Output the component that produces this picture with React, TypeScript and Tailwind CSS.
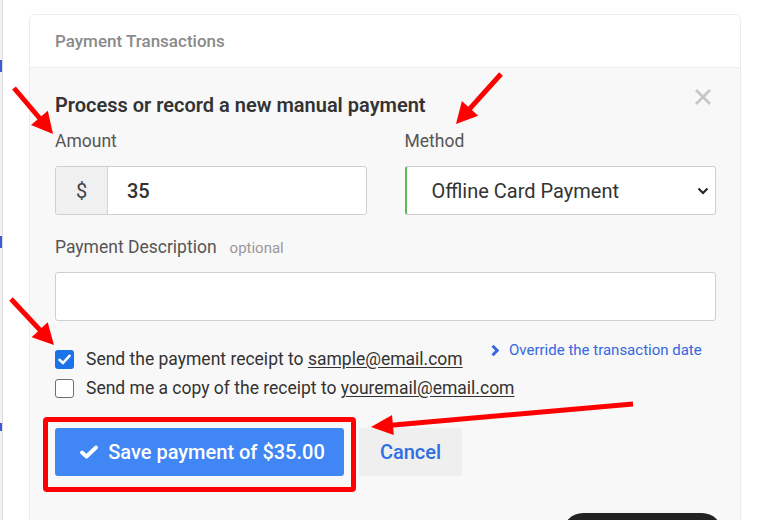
import React from "react";

type ArrowProps = { x1: number; y1: number; x2: number; y2: number; len?: number; half?: number };

const Arrow = ({ x1, y1, x2, y2, len = 21, half = 11 }: ArrowProps) => {
  const dx = x2 - x1;
  const dy = y2 - y1;
  const d = Math.hypot(dx, dy);
  const ux = dx / d;
  const uy = dy / d;
  const bx = x2 - ux * len;
  const by = y2 - uy * len;
  const px = -uy * half;
  const py = ux * half;
  return (
    <g>
      <line x1={x1} y1={y1} x2={bx + ux * 2} y2={by + uy * 2} stroke="#ff0000" strokeWidth={5} />
      <polygon points={`${x2},${y2} ${bx + px},${by + py} ${bx - px},${by - py}`} fill="#ff0000" />
    </g>
  );
};

const Checkbox = ({ checked }: { checked?: boolean }) =>
  checked ? (
    <span className="w-[19px] h-[19px] rounded-[3px] bg-[#1a73e8] flex items-center justify-center shrink-0">
      <svg width="13" height="11" viewBox="0 0 13 11">
        <path d="M1.5 5.8 L5 9 L11.5 1.8" stroke="white" strokeWidth="2.6" fill="none" strokeLinecap="round" strokeLinejoin="round" />
      </svg>
    </span>
  ) : (
    <span className="w-[19px] h-[19px] rounded-[3px] border-[1.5px] border-[#6f6f6f] bg-white shrink-0" />
  );

export default function App() {
  return (
    <div className="relative w-[765px] h-[520px] overflow-hidden bg-white font-['Roboto',sans-serif] text-[#333]">
      {/* cropped sidebar edge */}
      <div className="absolute left-0 top-0 w-[3px] h-full bg-[#f2f2f2] border-r border-[#dcdcdc]">
        <div className="mt-[60px] h-[12px] bg-[#3b5bdb]" />
        <div className="mt-[164px] h-[12px] bg-[#3b5bdb]" />
        <div className="mt-[175px] h-[8px] bg-[#3b5bdb]" />
      </div>

      <div className="ml-[29px] mt-[14px] w-[712px] h-[520px] border border-[#ececec] rounded-[6px] overflow-hidden">
        <div className="h-[53px] bg-white border-b border-[#ececec] flex items-center pl-[25px] pt-[1px]">
          <span className="text-[17px] font-medium text-[#8a8a8a]">Payment Transactions</span>
        </div>

        <div className="bg-[#f8f8f8] h-full pl-[25px] pr-[24px] pt-[25px]">
          <div className="flex items-center justify-between h-[24px]">
            <h2 className="text-[20px] font-semibold text-[#333] leading-[24px]">
              Process or record a new manual payment
            </h2>
            <svg width="18" height="18" viewBox="0 0 18 18" className="mr-[4px] -mt-[16px]">
              <path d="M2 2 L16 16 M16 2 L2 16" stroke="#c6c6c6" strokeWidth="2.6" />
            </svg>
          </div>

          <div className="grid grid-cols-2 gap-x-[38px] mt-[13px]">
            <div>
              <div className="text-[17.5px] leading-[22px] text-[#555]">Amount</div>
              <div className="mt-[14px] h-[49px] flex border border-[#cfcfcf] rounded-[3px] overflow-hidden bg-white">
                <div className="w-[52px] bg-[#f0f0f0] border-r border-[#d4d4d4] flex items-center justify-center text-[20px] text-[#444]">
                  $
                </div>
                <div className="flex items-center pl-[19px] text-[20px] font-medium text-[#333]">35</div>
              </div>
            </div>
            <div>
              <div className="text-[17.5px] leading-[22px] text-[#555]">Method</div>
              <div className="mt-[14px] h-[49px] flex items-center justify-between border border-[#cfcfcf] border-l-2 border-l-[#5cb85c] rounded-[3px] bg-white pl-[25px] pr-[6px]">
                <span className="text-[20px] text-[#333]">Offline Card Payment</span>
                <svg width="12" height="8" viewBox="0 0 12 8">
                  <path d="M1.5 1.5 L6 6 L10.5 1.5" stroke="#222" strokeWidth="2" fill="none" />
                </svg>
              </div>
            </div>
          </div>

          <div className="mt-[21px] flex items-baseline gap-[13px]">
            <span className="text-[17.5px] leading-[22px] text-[#555]">Payment Description</span>
            <span className="text-[15px] text-[#999]">optional</span>
          </div>
          <div className="mt-[12px] h-[49px] bg-white border border-[#cfcfcf] rounded-[3px]" />

          <div className="mt-[27px] flex flex-col gap-[5px] text-[17.5px] text-[#333] whitespace-nowrap">
            <div className="flex items-start h-[24px]">
              <label className="flex items-center gap-[12px] h-[24px] w-[435px]">
                <Checkbox checked />
                <span>
                  Send the payment receipt to <span className="underline underline-offset-2">sample@email.com</span>
                </span>
              </label>
              <div className="-mt-[6px] flex items-center gap-[9px] h-[18px] text-[15px] text-[#3467e0]">
                <svg width="10" height="13" viewBox="0 0 10 13">
                  <path d="M2.5 1.8 L7.2 6.5 L2.5 11.2" stroke="#3467e0" strokeWidth="3" fill="none" />
                </svg>
                <span>Override the transaction date</span>
              </div>
            </div>
            <label className="flex items-center gap-[12px] h-[24px]">
              <Checkbox />
              <span>
                Send me a copy of the receipt to <span className="underline underline-offset-2">youremail@email.com</span>
              </span>
            </label>
          </div>

          <div className="mt-[27px] flex gap-[15px]">
            <button className="w-[289px] h-[48px] rounded-[3px] bg-[#4086f4] text-white flex items-center justify-center gap-[10px] pl-[6px]">
              <svg width="18" height="14" viewBox="0 0 18 14">
                <path d="M2 7.5 L6.5 11.5 L16 2.5" stroke="white" strokeWidth="3.8" fill="none" strokeLinecap="round" strokeLinejoin="round" />
              </svg>
              <span className="text-[20px] font-medium">Save payment of $35.00</span>
            </button>
            <button className="w-[103px] h-[48px] rounded-[3px] bg-[#efefef] text-[#2f6de3] text-[20px] font-medium">
              Cancel
            </button>
          </div>
        </div>
      </div>

      {/* dark widget at bottom */}
      <div className="absolute left-[563px] top-[513px] w-[159px] h-[40px] rounded-[20px] bg-[#222]" />

      {/* annotations */}
      <div className="absolute left-[43px] top-[417px] w-[313px] h-[75px] border-[5px] border-[#ff0000] rounded-[4px]" />
      <svg className="absolute inset-0 pointer-events-none" width="765" height="520">
        <Arrow x1={14} y1={88} x2={53} y2={134} />
        <Arrow x1={501} y1={74} x2={456} y2={124} />
        <Arrow x1={11} y1={299} x2={54} y2={345} />
        <Arrow x1={633} y1={404} x2={371} y2={427} len={22} half={10} />
      </svg>
    </div>
  );
}
